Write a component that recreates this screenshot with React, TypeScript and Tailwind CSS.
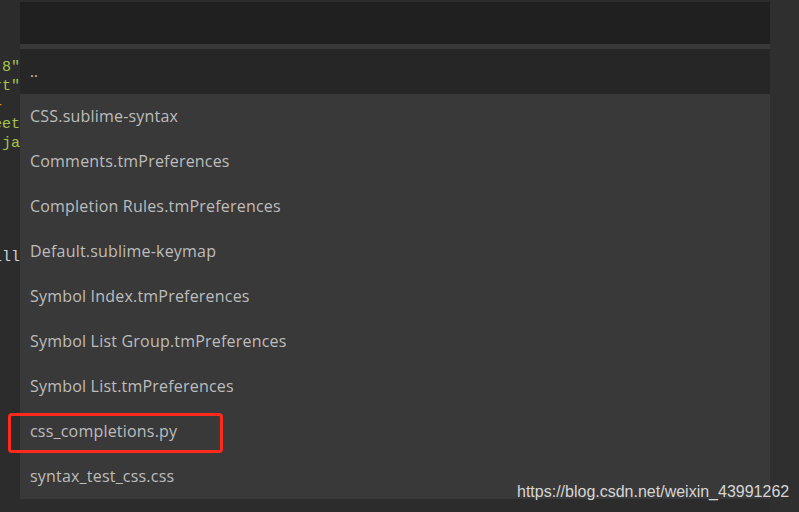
import React from "react";

const items = [
  "CSS.sublime-syntax",
  "Comments.tmPreferences",
  "Completion Rules.tmPreferences",
  "Default.sublime-keymap",
  "Symbol Index.tmPreferences",
  "Symbol List Group.tmPreferences",
  "Symbol List.tmPreferences",
  "css_completions.py",
  "syntax_test_css.css",
];

const codeLines: { t: string; c: string }[] = [
  { t: '-8"', c: "text-[#a6c44e]" },
  { t: 'rt"', c: "text-[#a6c44e]" },
  { t: "+  ", c: "text-[#e8922c]" },
  { t: "eet", c: "text-[#a6c44e]" },
  { t: "'ja", c: "text-[#a6c44e]" },
  { t: "", c: "" },
  { t: "", c: "" },
  { t: "", c: "" },
  { t: "", c: "" },
  { t: "", c: "" },
  { t: "ill", c: "text-[#cfd3d8]" },
];

export default function App() {
  return (
    <div className="w-[799px] h-[512px] bg-[#2c2c2c] flex overflow-hidden relative">
      <div
        className="w-[20px] shrink-0 flex flex-col pt-[58px] overflow-hidden text-[15px]"
        style={{ fontFamily: '"Liberation Mono", monospace' }}
      >
        {codeLines.map((l, i) => (
          <div key={i} className={`h-[19px] leading-[19px] flex justify-end whitespace-pre ${l.c}`}>
            {l.t}
          </div>
        ))}
      </div>
      <div className="w-[750px] shrink-0 flex flex-col pt-[2px]">
        <div className="h-[42px] bg-[#202020]" />
        <div className="h-[5px] bg-[#393939]" />
        <div
          className="h-[45px] bg-[#262626] flex items-center pl-[10px] text-[#c8c8c8] text-[15px]"
          style={{ fontFamily: '"Open Sans", sans-serif' }}
        >
          ..
        </div>
        <div className="bg-[#393939] flex flex-col">
          {items.map((it) => (
            <div
              key={it}
              className="h-[45px] flex items-center pl-[10px] pb-[2px] text-[#bdbdbd] text-[16px] tracking-[0.2px]"
              style={{ fontFamily: '"Open Sans", sans-serif' }}
            >
              {it}
            </div>
          ))}
        </div>
      </div>
      <div className="flex-1 bg-[#2f2f2f]" />
      <div className="absolute left-[8px] top-[413px] w-[215px] h-[40px] border-[3px] border-[#ff2a1c] rounded-[4px]" />
      <div
        className="absolute left-[517px] top-[482px] text-[16px] text-[#d6d6d6] leading-[20px]"
        style={{ fontFamily: '"Liberation Sans", Arial, sans-serif' }}
      >
        https://blog.csdn.net/weixin_43991262
      </div>
    </div>
  );
}
